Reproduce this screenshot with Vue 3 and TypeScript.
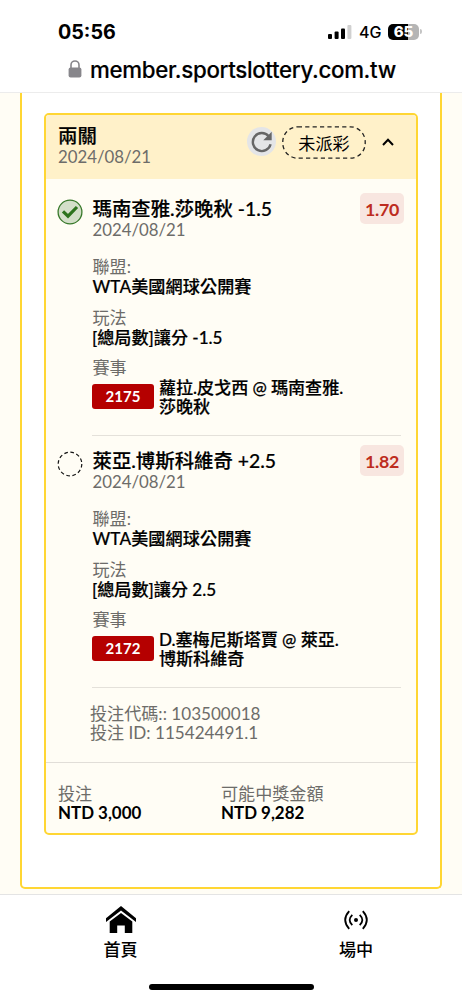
<script setup lang="ts">
interface Leg {
  name: string
  odds: string
  won: boolean
  play: string
  code: string
  match: string[]
}

const date = '2024/08/21'
const league = 'WTA美國網球公開賽'
const legs: Leg[] = [
  { name: '瑪南查雅.莎晚秋 -1.5', odds: '1.70', won: true, play: '[總局數]讓分 -1.5', code: '2175', match: ['蘿拉.皮戈西 @ 瑪南查雅.', '莎晚秋'] },
  { name: '萊亞.博斯科維奇 +2.5', odds: '1.82', won: false, play: '[總局數]讓分 2.5', code: '2172', match: ['D.塞梅尼斯塔賈 @ 萊亞.', '博斯科維奇'] },
]
</script>

<template>
  <div class="screen">
    <header class="browser">
      <div class="status">
        <span class="time">05:56</span>
        <div class="signals">
          <svg class="bars" width="24" height="16" viewBox="0 0 24 16">
            <rect x="0" y="10" width="4" height="5" rx="1" />
            <rect x="6.6" y="7.5" width="4" height="7.5" rx="1" />
            <rect x="13" y="4.5" width="4" height="10.5" rx="1" />
            <rect x="19.4" y="1" width="4" height="14" rx="1" fill="#d0d0d0" />
          </svg>
          <span class="net">4G</span>
          <div class="battery"><span>65</span></div>
          <i class="cap"></i>
        </div>
      </div>
      <div class="address">
        <svg width="14" height="18" viewBox="0 0 14 18">
          <path d="M3 9V5a4 4 0 0 1 8 0v4" fill="none" stroke="#87868b" stroke-width="1.6" />
          <rect x="0.6" y="7.6" width="12.8" height="10" rx="2" fill="#87868b" />
        </svg>
        <span>member.sportslottery.com.tw</span>
      </div>
    </header>

    <main class="page">
      <section class="frame">
        <article class="card">
          <div class="card-head">
            <div class="head-text">
              <h1>兩關</h1>
              <p class="date">{{ date }}</p>
            </div>
            <div class="refresh">
              <svg width="22" height="22" viewBox="0 0 22 22">
                <path d="M17.7 5.2A9 9 0 1 0 19.6 13.2" fill="none" stroke="#666" stroke-width="2.4" />
                <path d="M20.7 0.8V9.2H12.3Z" fill="#666" />
              </svg>
            </div>
            <div class="pill">
              <svg width="84" height="33" viewBox="0 0 84 33">
                <rect x="0.8" y="0.8" width="82.4" height="31.4" rx="15" fill="none" stroke="#222" stroke-width="1.3" stroke-dasharray="4.2 3.2" />
              </svg>
              <span>未派彩</span>
            </div>
            <svg class="chevron" width="12" height="8" viewBox="0 0 12 8">
              <path d="M1 7 6 1.8 11 7" fill="none" stroke="#000" stroke-width="2" />
            </svg>
          </div>

          <section v-for="leg in legs" :key="leg.code" class="leg">
            <svg v-if="leg.won" class="mark" width="26" height="26" viewBox="0 0 26 26">
              <circle cx="13" cy="13" r="11.9" fill="#d3dfc9" stroke="#38792b" stroke-width="1.3" />
              <path d="M6 12.4 11 17.2 20 8" fill="none" stroke="#2c731d" stroke-width="3.2" />
            </svg>
            <svg v-else class="mark" width="26" height="26" viewBox="0 0 26 26">
              <circle cx="13" cy="13" r="11.8" fill="none" stroke="#111" stroke-width="1.2" stroke-dasharray="3.6 2.58" />
            </svg>
            <div class="leg-body">
              <div class="leg-top">
                <div>
                  <h2>{{ leg.name }}</h2>
                  <p class="date">{{ date }}</p>
                </div>
                <span class="odds">{{ leg.odds }}</span>
              </div>
              <dl>
                <dt>聯盟:</dt>
                <dd class="league">{{ league }}</dd>
                <dt>玩法</dt>
                <dd>{{ leg.play }}</dd>
                <dt>賽事</dt>
              </dl>
              <div class="match">
                <span class="code">{{ leg.code }}</span>
                <p><span v-for="line in leg.match" :key="line">{{ line }}</span></p>
              </div>
            </div>
          </section>

          <div class="ids">
            <p>投注代碼:: 103500018</p>
            <p>投注 ID: 115424491.1</p>
          </div>
          <div class="totals">
            <div><p>投注</p><strong>NTD 3,000</strong></div>
            <div><p>可能中獎金額</p><strong>NTD 9,282</strong></div>
          </div>
        </article>
      </section>
    </main>

    <nav class="tabs">
      <a class="tab home">
        <svg width="30" height="28" viewBox="0 0 30 28">
          <path d="M0 12.2 15 0 30 12.2V16L15 4.6 0 16Z" />
          <path d="M3.7 15.6 15 7 26.3 15.6V27H18.8V19.4H11.2V27H3.7Z" />
        </svg>
        <span>首頁</span>
      </a>
      <a class="tab live">
        <svg width="24" height="28" viewBox="0 0 24 28" fill="none" stroke="#000" stroke-width="1.8">
          <path d="M5.2 5.2Q-2.8 14 5.2 22.8M18.8 5.2Q26.8 14 18.8 22.8M8.3 8.8Q3 14 8.3 19.2M15.7 8.8Q21 14 15.7 19.2" />
          <circle cx="12" cy="14" r="2" fill="#000" stroke="none" />
        </svg>
        <span>場中</span>
      </a>
      <i class="indicator"></i>
    </nav>
  </div>
</template>

<style>
body {
  background: #fff;
  overflow: hidden;
}
</style>

<style scoped>
* {
  box-sizing: border-box;
}
h1, h2, p, dl, dt, dd {
  margin: 0;
}
.screen {
  width: 462px;
  height: 1000px;
  display: flex;
  flex-direction: column;
  overflow: hidden;
  background: #fff;
  color: #000;
  font-family: Lato, "Noto Sans CJK TC", sans-serif;
  font-size: 17.1px;
  white-space: nowrap;
}
.browser {
  height: 93px;
  flex: none;
  border-bottom: 1.5px solid #ececec;
  font-family: Inter, sans-serif;
}
.status {
  height: 31px;
  margin-top: 16px;
  padding: 0 40px 0 58px;
  display: flex;
  justify-content: space-between;
  align-items: center;
}
.time {
  font-size: 19.7px;
  font-weight: 700;
}
.signals {
  display: flex;
  align-items: center;
}
.net {
  margin-left: 7px;
  width: 22px;
  font-size: 16px;
  font-weight: 500;
}
.battery {
  margin-left: 7px;
  width: 31px;
  height: 16px;
  border-radius: 5px;
  background: linear-gradient(90deg, #000 65%, #b5b5b5 65%);
  color: #fff;
  font-size: 15px;
  font-weight: 800;
  line-height: 16px;
  text-align: center;
}
.cap {
  width: 2px;
  height: 5px;
  margin-left: 1px;
  border-radius: 0 2px 2px 0;
  background: #c4c4c4;
}
.address {
  height: 30px;
  margin-top: 7px;
  padding-left: 68px;
  display: flex;
  align-items: center;
  gap: 8px;
  font-size: 22.3px;
  font-weight: 500;
  letter-spacing: -0.33px;
  -webkit-text-stroke: 0.15px currentColor;
}
.page {
  height: 801px;
  flex: none;
  padding: 0 20px;
  background: #fffdf5;
}
.frame {
  height: 796px;
  padding: 20px 22px 0;
  border: 2px solid #ffd633;
  border-top: 0;
  border-radius: 0 0 5px 5px;
  background: #fff;
}
.card {
  width: 374px;
  height: 722px;
  border: 2px solid #ffd633;
  border-radius: 5px;
  background: #fffdf5;
  overflow: hidden;
}
.card-head {
  height: 64px;
  padding: 0 20px 0 12px;
  display: flex;
  align-items: flex-start;
  background: #fff1c9;
}
.head-text {
  width: 189px;
  padding-top: 10px;
}
h1, h2 {
  height: 22px;
  line-height: 22px;
  font-size: 19.4px;
  font-weight: 500;
  -webkit-text-stroke: 0.2px currentColor;
}
.date {
  height: 18px;
  line-height: 19px;
  font-size: 16.8px;
  color: #6d6c69;
}
.refresh {
  width: 29px;
  height: 29px;
  margin-top: 12px;
  border-radius: 50%;
  background: #e4e5e7;
  display: flex;
  align-items: center;
  justify-content: center;
}
.pill {
  width: 84px;
  height: 33px;
  margin: 11px 0 0 6px;
  display: grid;
  place-items: center;
}
.pill > * {
  grid-area: 1 / 1;
}
.chevron {
  margin: 23px 0 0 16px;
}
.leg {
  height: 252px;
  padding: 14px 11px 0 11px;
  display: flex;
  gap: 9px;
}
.mark {
  flex: none;
  margin-top: 6px;
}
.leg-body {
  flex: 1;
  height: 243px;
  position: relative;
}
.leg-body::after {
  content: "";
  position: absolute;
  left: 0;
  right: 4px;
  bottom: 0;
  height: 1px;
  background: #e4e1da;
}
.leg-top {
  height: 63px;
  display: flex;
  justify-content: space-between;
}
.leg-top h2 {
  margin: 5px 0 0 0.5px;
}
.leg-top .date {
  margin-left: 0.5px;
}
.odds {
  width: 44px;
  height: 31px;
  margin-right: 1px;
  border-radius: 5px;
  background: #f8e6e0;
  color: #bd2c20;
  font-size: 17.8px;
  font-weight: 700;
  letter-spacing: -0.3px;
  line-height: 32px;
  text-align: center;
}
dt {
  height: 20px;
  padding-left: 0.5px;
  line-height: 21px;
  color: #6d6c69;
}
dd {
  height: 22px;
  margin-bottom: 8.5px;
  line-height: 22px;
  font-weight: 500;
  -webkit-text-stroke: 0.2px currentColor;
}
.league {
  padding-left: 0.5px;
  letter-spacing: 0.1px;
}
.match {
  display: flex;
  gap: 5px;
  line-height: 18.5px;
  font-weight: 500;
}
.match p {
  margin-top: 2px;
  letter-spacing: -0.05px;
  -webkit-text-stroke: 0.2px currentColor;
}
.match p span {
  display: block;
}
.code {
  width: 62px;
  height: 25px;
  margin-top: 7px;
  border-radius: 3px;
  background: #b50000;
  color: #fff;
  font-size: 15px;
  font-weight: 700;
  line-height: 25px;
  text-align: center;
}
.ids {
  height: 80px;
  padding: 22px 0 0 44px;
  border-bottom: 1px solid #e1ded8;
  color: #6d6c69;
  line-height: 18.5px;
}
.totals {
  padding: 22px 0 0 12px;
  display: flex;
  line-height: 18.5px;
}
.totals div {
  width: 163px;
}
.totals p {
  color: #6d6c69;
}
.totals strong {
  font-size: 16.9px;
}
.tabs {
  flex: 1;
  border-top: 1px solid #e4e4e4;
  position: relative;
  display: flex;
}
.tab {
  display: flex;
  flex-direction: column;
  align-items: center;
  flex: none;
  padding-top: 11px;
  font-weight: 500;
  line-height: 24px;
}
.tab span {
  margin-top: 4px;
}
.home {
  width: 241px;
}
.live {
  width: 230px;
}
.indicator {
  position: absolute;
  left: 149px;
  top: 89px;
  width: 165px;
  height: 6px;
  border-radius: 3px;
  background: #000;
}
</style>
